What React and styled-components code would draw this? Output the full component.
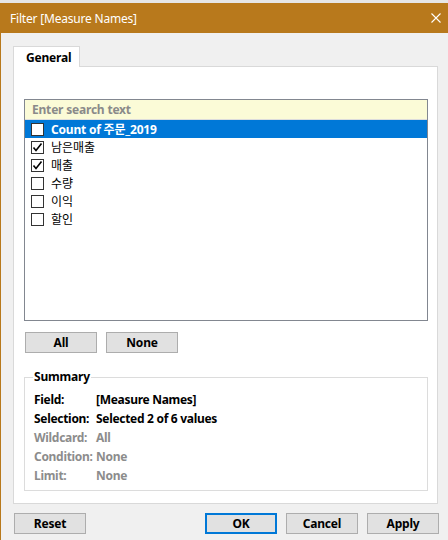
import React from "react";
import styled, { createGlobalStyle } from "styled-components";

const GlobalStyle = createGlobalStyle`
  html, body {
    margin: 0;
    padding: 0;
    background: #f0f0f0;
  }
  body {
    font-family: "Noto Sans", "Noto Sans CJK KR", sans-serif;
    font-size: 12px;
  }
`;

const Window = styled.div`
  width: 448px;
  height: 540px;
  display: flex;
  flex-direction: column;
  overflow: hidden;
  background: #f0f0f0;
`;

const TopStrip = styled.div`
  height: 3px;
  background: #e6e6e6;
`;

const TitleBar = styled.div`
  height: 30px;
  background: #b8791c;
  color: #fff;
  display: flex;
  align-items: center;
  justify-content: space-between;
  padding: 0 7px 0 10px;
  font-size: 12px;
  letter-spacing: -0.2px;
`;

const Body = styled.div`
  flex: 1;
  border-left: 1px solid #b8791c;
  padding: 12px 0 0 12px;
  display: flex;
  flex-direction: column;
`;

const TabStrip = styled.div`
  display: flex;
`;

const Tab = styled.div`
  width: 67px;
  height: 21px;
  box-sizing: border-box;
  background: #fff;
  border: 1px solid #d9d9d9;
  border-bottom: none;
  position: relative;
  top: 1px;
  z-index: 1;
  font-weight: bold;
  letter-spacing: -0.2px;
  display: flex;
  align-items: center;
  padding-left: 12px;
`;

const Panel = styled.div`
  width: 425px;
  height: 438px;
  box-sizing: border-box;
  background: #fff;
  border: 1px solid #d9d9d9;
  padding: 32px 9px 0 10px;
  display: flex;
  flex-direction: column;
`;

const ListBox = styled.div`
  height: 222px;
  box-sizing: border-box;
  border: 1px solid #828790;
  background: #fff;
`;

const Search = styled.div`
  height: 19px;
  background: #fbfbd7;
  border-bottom: 1px solid #dcdcdc;
  color: #8a8a8a;
  font-weight: bold;
  letter-spacing: -0.2px;
  display: flex;
  align-items: center;
  padding-left: 7px;
`;

const Row = styled.div`
  height: 18px;
  display: flex;
  align-items: center;
  padding-left: 6px;
  gap: 7px;
  background: ${(p) => (p.$selected ? "#0078d7" : "transparent")};
  color: ${(p) => (p.$selected ? "#fff" : "#000")};
  font-weight: ${(p) => (p.$selected ? "bold" : "normal")};
  letter-spacing: ${(p) => (p.$selected ? "-0.2px" : "0")};
`;

const Box = styled.span`
  width: 13px;
  height: 13px;
  box-sizing: border-box;
  border: 1px solid #333;
  background: #fff;
  display: flex;
  align-items: center;
  justify-content: center;
  flex: none;
`;

const ButtonRow = styled.div`
  display: flex;
  gap: 9px;
  margin-top: 11px;
  padding-left: 1px;
`;

const Button = styled.button`
  width: 72px;
  height: 21px;
  box-sizing: border-box;
  background: #e1e1e1;
  border: ${(p) => (p.$default ? "2px solid #0078d7" : "1px solid #adadad")};
  font-family: inherit;
  font-size: 12px;
  font-weight: bold;
  letter-spacing: -0.2px;
  color: #000;
  padding: 0;
  display: flex;
  align-items: center;
  justify-content: center;
`;

const Group = styled.fieldset`
  margin: 16px 0 0 0;
  padding: 5px 0 0 9px;
  border: 1px solid #dcdcdc;
  height: 122px;
  box-sizing: border-box;
  min-width: 0;
`;

const Legend = styled.legend`
  font-weight: bold;
  letter-spacing: -0.2px;
  padding: 0 1px;
  margin-left: -1px;
  line-height: 16px;
`;

const InfoRow = styled.div`
  height: 19px;
  display: flex;
  align-items: center;
  font-weight: bold;
  letter-spacing: -0.3px;
  color: ${(p) => (p.$dim ? "#8c8c8c" : "#000")};
`;

const InfoLabel = styled.span`
  width: 62px;
  flex: none;
  white-space: nowrap;
`;

const Footer = styled.div`
  display: flex;
  justify-content: space-between;
  margin-top: 9px;
  padding-left: 1px;
  width: 425px;
`;

const Right = styled.div`
  display: flex;
  gap: 9px;
`;

const Check = () => (
  <svg width="11" height="11" viewBox="0 0 11 11">
    <path d="M1.5 5.5 L4 8.5 L9.5 1.5" fill="none" stroke="#000" strokeWidth="1.6" />
  </svg>
);

const Close = () => (
  <svg width="10" height="10" viewBox="0 0 10 10">
    <path d="M0.5 0.5 L9.5 9.5 M9.5 0.5 L0.5 9.5" stroke="#fff" strokeWidth="1.1" />
  </svg>
);

const items = [
  { name: "Count of 주문_2019", checked: false, selected: true },
  { name: "남은매출", checked: true },
  { name: "매출", checked: true },
  { name: "수량", checked: false },
  { name: "이익", checked: false },
  { name: "할인", checked: false },
];

const info = [
  { label: "Field:", value: "[Measure Names]" },
  { label: "Selection:", value: "Selected 2 of 6 values" },
  { label: "Wildcard:", value: "All", dim: true },
  { label: "Condition:", value: "None", dim: true },
  { label: "Limit:", value: "None", dim: true },
];

export default function App() {
  return (
    <Window>
      <GlobalStyle />
      <TopStrip />
      <TitleBar>
        <span>Filter [Measure Names]</span>
        <Close />
      </TitleBar>
      <Body>
        <TabStrip>
          <Tab>General</Tab>
        </TabStrip>
        <Panel>
          <ListBox>
            <Search>Enter search text</Search>
            {items.map((it) => (
              <Row key={it.name} $selected={it.selected}>
                <Box>{it.checked && <Check />}</Box>
                <span>{it.name}</span>
              </Row>
            ))}
          </ListBox>
          <ButtonRow>
            <Button>All</Button>
            <Button>None</Button>
          </ButtonRow>
          <Group>
            <Legend>Summary</Legend>
            {info.map((r) => (
              <InfoRow key={r.label} $dim={r.dim}>
                <InfoLabel>{r.label}</InfoLabel>
                <span>{r.value}</span>
              </InfoRow>
            ))}
          </Group>
        </Panel>
        <Footer>
          <Button>Reset</Button>
          <Right>
            <Button $default>OK</Button>
            <Button>Cancel</Button>
            <Button>Apply</Button>
          </Right>
        </Footer>
      </Body>
    </Window>
  );
}
